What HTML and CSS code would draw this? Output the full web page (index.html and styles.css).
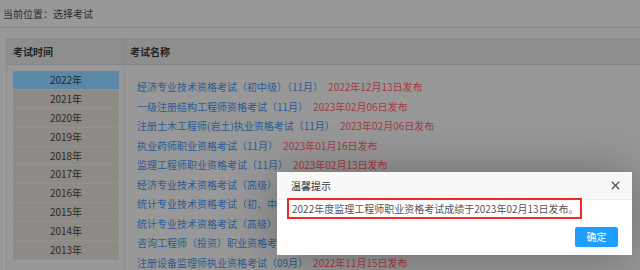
FILE: index.html
```html
<!DOCTYPE html>
<html lang="zh-CN">
<head>
<meta charset="utf-8">
<title>选择考试</title>
<link rel="stylesheet" href="styles.css">
</head>
<body>
<div class="crumb">当前位置：选择考试</div>
<div class="table">
  <div class="thead">
    <div class="th th-year">考试时间</div>
    <div class="th th-name">考试名称</div>
  </div>
  <div class="tbody">
    <ul class="years">
      <li class="active">2022年</li>
      <li>2021年</li>
      <li>2020年</li>
      <li>2019年</li>
      <li>2018年</li>
      <li>2017年</li>
      <li>2016年</li>
      <li>2015年</li>
      <li>2014年</li>
      <li>2013年</li>
    </ul>
    <ul class="exams">
      <li><a class="name">经济专业技术资格考试（初中级）（11月）</a><span class="date">2022年12月13日发布</span></li>
      <li><a class="name">一级注册结构工程师资格考试（11月）</a><span class="date">2023年02月06日发布</span></li>
      <li><a class="name">注册土木工程师(岩土)执业资格考试（11月）</a><span class="date">2023年02月06日发布</span></li>
      <li><a class="name">执业药师职业资格考试（11月）</a><span class="date">2023年01月16日发布</span></li>
      <li><a class="name">监理工程师职业资格考试（11月）</a><span class="date">2023年02月13日发布</span></li>
      <li><a class="name">经济专业技术资格考试（高级）（06月）</a><span class="date">2022年09月20日发布</span></li>
      <li><a class="name">统计专业技术资格考试（初、中级）（10月）</a><span class="date">2022年12月19日发布</span></li>
      <li><a class="name">统计专业技术资格考试（高级）（10月）</a><span class="date">2022年12月19日发布</span></li>
      <li><a class="name">咨询工程师（投资）职业资格考试（04月）</a><span class="date">2022年06月28日发布</span></li>
      <li><a class="name">注册设备监理师执业资格考试（09月）</a><span class="date">2022年11月15日发布</span></li>
    </ul>
  </div>
</div>

<div class="dialog">
  <div class="dlg-title">
    <span>温馨提示</span>
    <svg class="close" width="9" height="9" viewBox="0 0 9 9"><path d="M0.8 0.8 L8.2 8.2 M8.2 0.8 L0.8 8.2" stroke="#555" stroke-width="1.3" fill="none"/></svg>
  </div>
  <div class="dlg-body"><span class="note">2022年度监理工程师职业资格考试成绩于2023年02月13日发布。</span></div>
  <div class="dlg-foot"><a class="btn">确定</a></div>
</div>
</body>
</html>
```

FILE: styles.css
```css
html, body {
  margin: 0;
  padding: 0;
}
body {
  background: #989898;
  font-family: "Noto Sans CJK SC", "Microsoft YaHei", sans-serif;
  font-size: 10px;
  color: #2e2e2e;
  overflow: hidden;
  width: 640px;
  height: 270px;
  position: relative;
}
.crumb {
  height: 27px;
  line-height: 27px;
  padding-left: 3px;
  border-bottom: 1px solid #8a8a8a;
  color: #2e2e2e;
}
.table {
  margin: 10px -20px 0 6px;
  border: 1px solid #8b8b8b;
  border-bottom: 0;
}
.thead {
  display: grid;
  grid-template-columns: 118px 1fr;
  height: 25px;
  line-height: 25px;
  background: #8e8e8e;
  border-bottom: 1px solid #868686;
  font-weight: bold;
  color: #222;
}
.th-year {
  padding-left: 6px;
  border-right: 1px solid #888;
}
.th-name {
  padding-left: 5px;
}
.tbody {
  display: grid;
  grid-template-columns: 118px 1fr;
  height: 205px;
  overflow: hidden;
}
.years {
  margin: 0;
  padding: 6px 5px 0 6px;
  list-style: none;
  border-right: 1px solid #8c8c8c;
}
.years li {
  box-sizing: border-box;
  height: 18.9px;
  line-height: 18px;
  text-align: center;
  background: #8e8a85;
  border-bottom: 1px solid #94908b;
  color: #2a2a2a;
}
.years li.active {
  background: #5a88a6;
  color: #1f2c38;
}
.exams {
  margin: 0;
  padding: 12px 0 0 12px;
  list-style: none;
}
.exams li {
  line-height: 19.55px;
  white-space: nowrap;
}
.name {
  color: #2b5a96;
}
.date {
  color: #a33a43;
  margin-left: 5px;
}
.dialog {
  position: absolute;
  left: 277px;
  top: 172px;
  width: 355px;
  background: #fff;
  box-shadow: 1px 1px 50px rgba(0, 0, 0, 0.3);
}
.dlg-title {
  box-sizing: border-box;
  height: 28px;
  padding: 0 12px 0 14px;
  background: #f8f8f8;
  border-bottom: 1px solid #eee;
  color: #333;
  display: flex;
  align-items: center;
  justify-content: space-between;
}
.close {
  display: block;
}
.dlg-body {
  margin-top: -2px;
  padding-left: 10px;
  height: 21px;
}
.note {
  display: inline-block;
  box-sizing: border-box;
  width: 295px;
  height: 21px;
  line-height: 17px;
  padding: 0 3px;
  border: 2px solid #f02828;
  color: #555;
  white-space: nowrap;
}
.dlg-foot {
  display: flex;
  justify-content: flex-end;
  padding: 8px 14px 8px 0;
}
.btn {
  display: block;
  width: 43px;
  height: 20px;
  line-height: 20px;
  text-align: center;
  background: #1e9fff;
  color: #fff;
  border-radius: 2px;
}
```
